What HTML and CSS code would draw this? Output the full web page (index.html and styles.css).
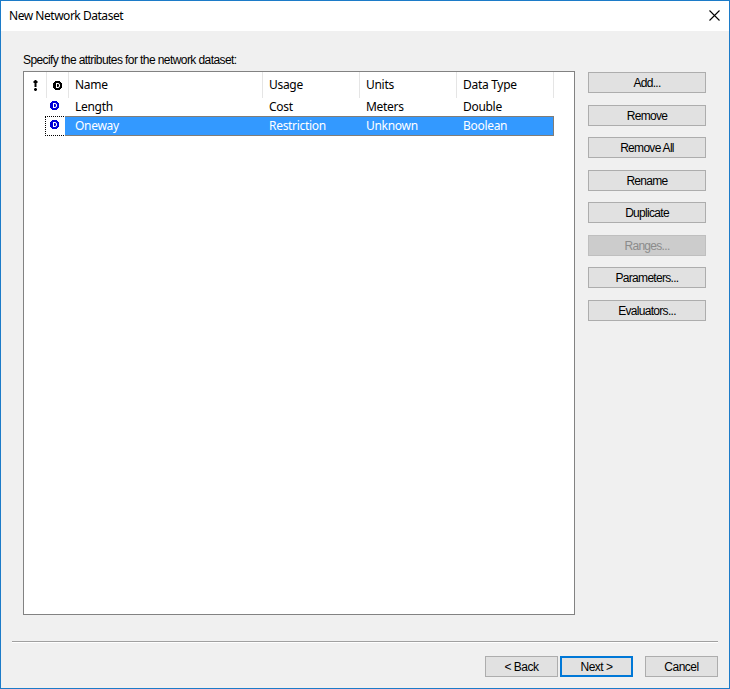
FILE: index.html
```html
<!DOCTYPE html>
<html lang="en">
<head>
<meta charset="utf-8">
<title>New Network Dataset</title>
<link rel="stylesheet" href="styles.css">
</head>
<body>
<svg width="0" height="0" class="defs">
  <symbol id="disc" viewBox="0 0 9 9">
    <path fill="currentColor" d="M2 0h5v1h1v1h1v5h-1v1h-1v1h-5v-1h-1v-1h-1v-5h1v-1h1z"/>
    <path fill="#fff" fill-rule="evenodd" d="M3 2h2.500l1.500 1.500v2l-1.500 1.500h-2.500zM4 3v3h1l1-.8v-1.400l-1-.8z"/>
  </symbol>
</svg>
<div class="window">
  <header class="titlebar">
    <span class="title">New Network Dataset</span>
    <svg class="close" width="11" height="11" viewBox="0 0 11 11"><path d="M.5 .5l10 10M10.5 .5l-10 10" fill="none" stroke="#000" stroke-width="1.1"/></svg>
  </header>
  <main class="content">
    <div class="caption">Specify the attributes for the network dataset:</div>
    <div class="panel">
      <div class="list">
        <div class="row head">
          <span class="icon"><svg width="5" height="11" viewBox="0 0 5 11"><path d="M1.500 0h2v1h1v2h-1v4h-2v-4h-1v-2h1zM1.500 8h2v1h.5v1h-.5v1h-2v-1h-.5v-1h.5z"/></svg></span>
          <span class="icon"><svg width="9" height="9"><use href="#disc"/></svg></span>
          <span class="cell name">Name</span><span class="cell usage">Usage</span><span class="cell units">Units</span><span class="cell type">Data Type</span>
        </div>
        <div class="row">
          <span></span>
          <span class="icon blue"><svg width="9" height="9"><use href="#disc"/></svg></span>
          <span class="cell">Length</span><span class="cell">Cost</span><span class="cell">Meters</span><span class="cell">Double</span>
        </div>
        <div class="row selected">
          <span></span>
          <span class="icon blue"><svg width="9" height="9"><use href="#disc"/></svg></span>
          <span class="cell">Oneway</span><span class="cell">Restriction</span><span class="cell">Unknown</span><span class="cell">Boolean</span>
        </div>
      </div>
      <div class="actions">
        <button>Add...</button>
        <button>Remove</button>
        <button>Remove All</button>
        <button>Rename</button>
        <button>Duplicate</button>
        <button disabled>Ranges...</button>
        <button>Parameters...</button>
        <button>Evaluators...</button>
      </div>
    </div>
  </main>
  <footer class="footer">
    <button>&lt; Back</button>
    <button class="primary">Next &gt;</button>
    <button class="cancel">Cancel</button>
  </footer>
</div>
</body>
</html>
```
FILE: styles.css
```css
* { box-sizing: border-box; }
body { margin: 0; }
.defs { position: absolute; }
.window {
  width: 730px; height: 689px;
  display: flex; flex-direction: column;
  background: #f0f0f0;
  border: 1px solid #1c7bc8;
  color: #000;
  font: 12px/15px "Liberation Sans", Arial, sans-serif;
  letter-spacing: -0.7px;
}
.titlebar {
  height: 30px; flex: none;
  padding: 0 9px 0 8px;
  display: flex; align-items: center; justify-content: space-between;
  background: #fff;
}
.title { font: 12px/16px "Noto Sans", sans-serif; letter-spacing: -0.47px; }
.close { margin-bottom: 1px; }
.content { padding: 21px 23px 0 22px; }
.caption { height: 19px; line-height: 17px; letter-spacing: -0.58px; white-space: nowrap; }
.panel { display: flex; gap: 13px; }
.list {
  width: 552px; height: 544px;
  background: #fff; border: 1px solid #828282;
  font: 12px/19px "Noto Sans", sans-serif;
  letter-spacing: -0.3px;
}
.row {
  width: 530px; height: 19px;
  display: grid;
  grid-template-columns: 23px 22px 194px 97px 97px 97px;
}
.head { height: 25px; line-height: 26px; }
.head > span { border-right: 1px solid #e5e5e5; }
.cell { padding-left: 6px; white-space: nowrap; }
.icon { display: flex; align-items: center; justify-content: center; }
.blue { color: #0000d8; padding: 0 7px 2px 0; }
.selected { color: #fff; line-height: 18px; }
.selected .cell { background: #3399ff; border: solid #807d78; border-width: 1px 0; }
.selected .cell:last-child { border-right-width: 1px; }
.selected .blue {
  margin: 0 3px 0 -2px; padding: 0 4px 4px 0;
  border: 1px dotted #000; border-right: 0;
}
.selected .cell:nth-child(3) { margin-left: -4px; padding-left: 10px; }
.actions { padding-top: 1px; display: flex; flex-direction: column; gap: 11.5px; }
button {
  width: 118px; height: 21px; padding: 2px 0 0;
  background: #e1e1e1; border: 1px solid #adadad; border-radius: 0;
  color: #000; font: inherit; letter-spacing: inherit;
}
button:disabled { background: #ccc; border-color: #bfbfbf; color: #8b8b8b; }
.footer {
  margin: 26px 11px 0; padding-top: 14px;
  border-top: 1px solid #a0a0a0; box-shadow: inset 0 1px #fff;
  display: flex; justify-content: flex-end; gap: 2px;
}
.footer button { width: 73px; letter-spacing: -0.5px; }
.footer .primary { border: 2px solid #0078d7; padding-top: 1px; }
.footer .cancel { margin-left: 10px; }
```
